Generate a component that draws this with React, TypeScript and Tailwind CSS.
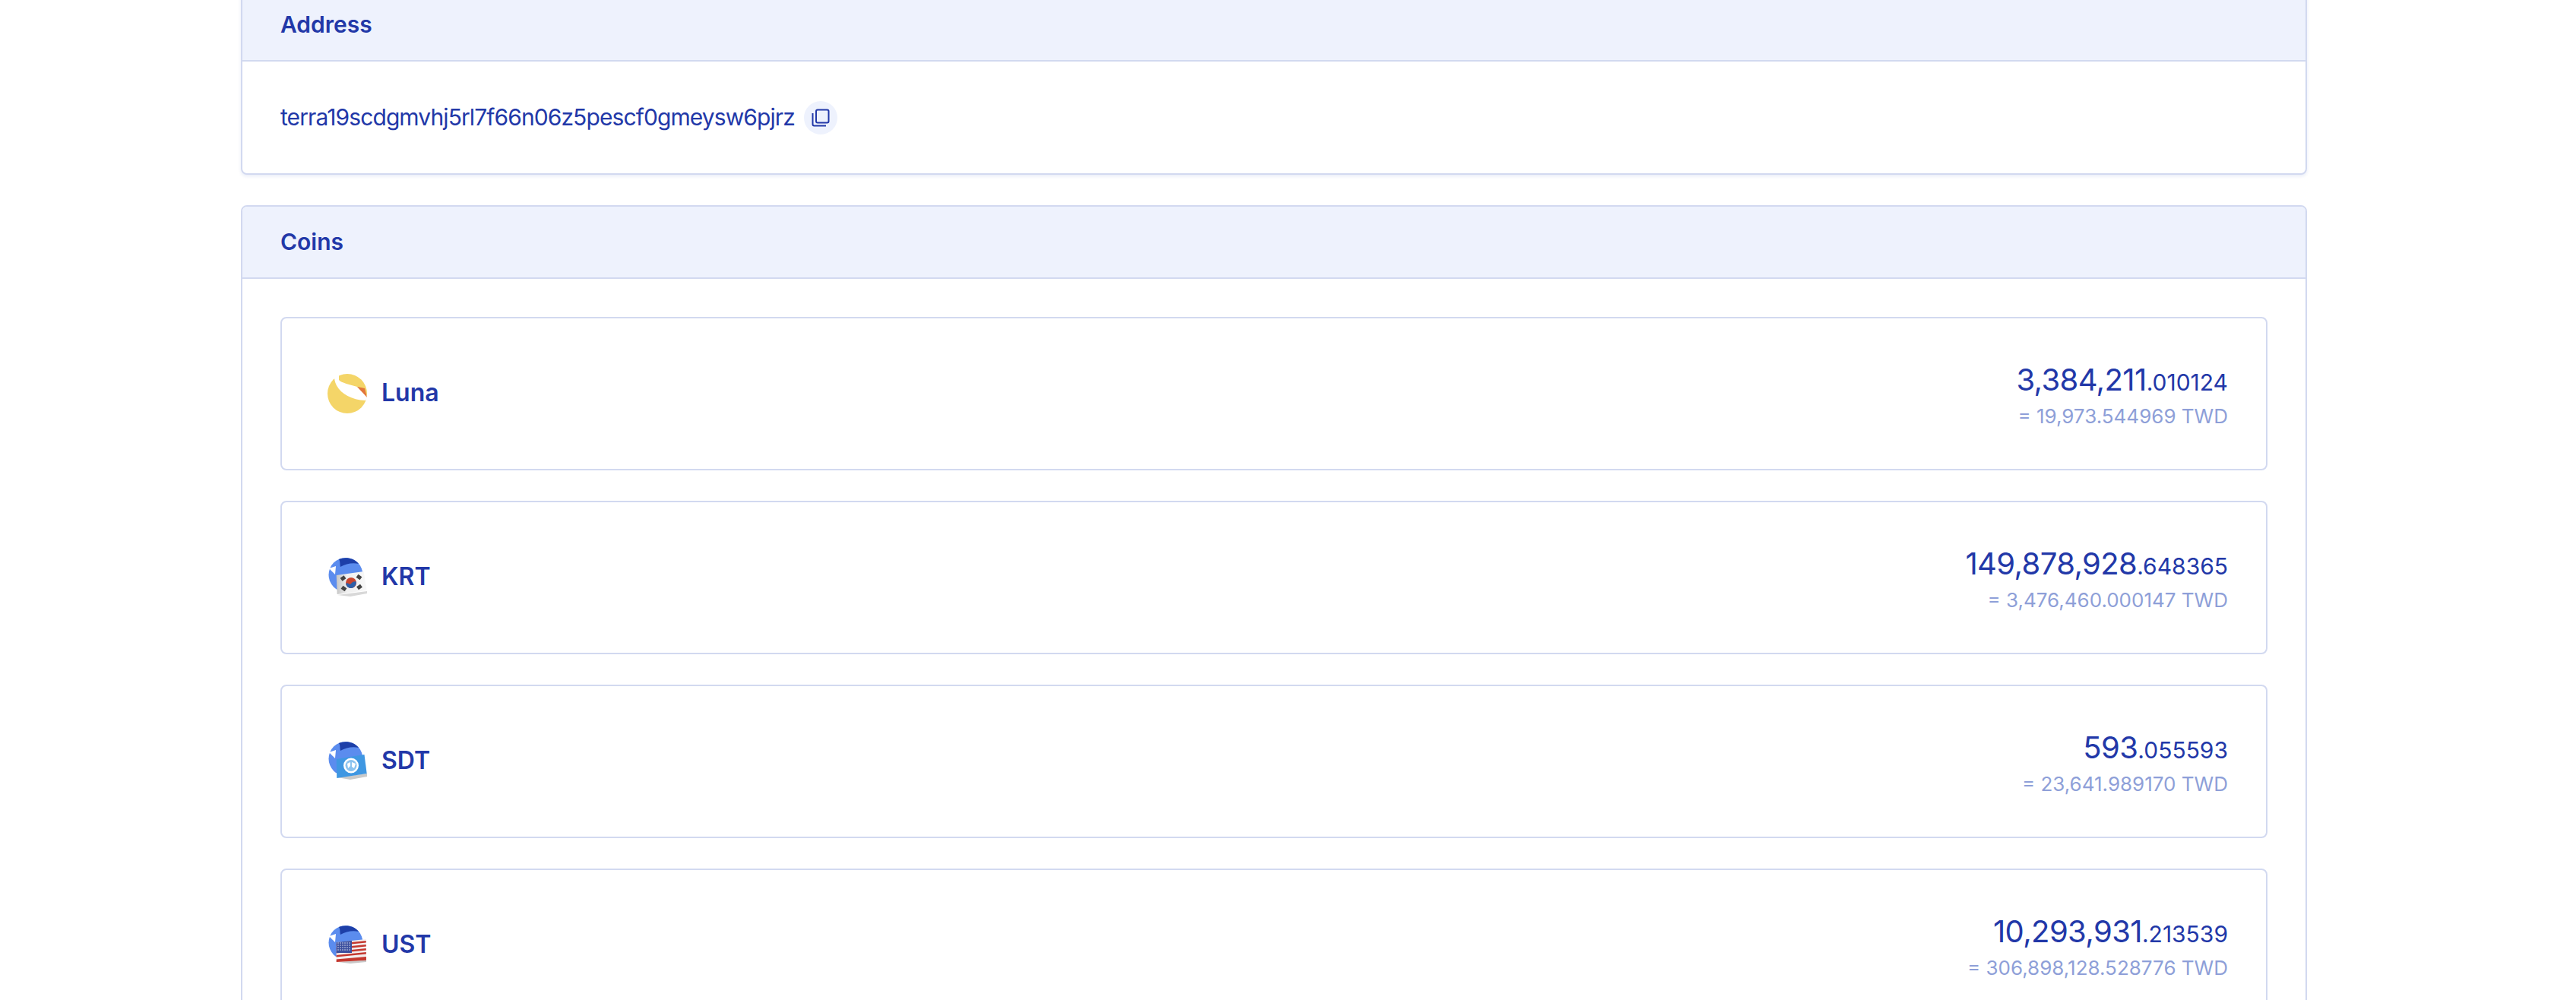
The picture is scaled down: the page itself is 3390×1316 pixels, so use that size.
import type { ReactNode } from "react";

const font = "font-['Inter','Liberation_Sans',sans-serif]";

const Globe = () => (
  <>
    <circle cx="24" cy="22.5" r="22.5" fill="#5b8cee" />
    <path d="M15 2 C22 -1 34 -1 41 8 C33 6 24 8 17 12 C16 8 17 5 15 2 Z" fill="#1d3fa8" />
    <path d="M2 14 L11 11 L10 22 C7 19 4 16 2 14 Z" fill="#ffffff" />
  </>
);

const LunaIcon = () => (
  <svg width="52" height="52" viewBox="0 0 52 52">
    <circle cx="26" cy="26" r="26" fill="#f4d568" />
    <path d="M9 5 C10 20 25 34 50 35 L53 30 L39 17 C30 14 18 12 15 8 L15 1 Z" fill="#ffffff" />
    <path d="M39 17 L49 19 L52 31 Z" fill="#e2763a" />
  </svg>
);

const KrtIcon = () => (
  <svg width="52" height="52" viewBox="0 0 52 52">
    <defs>
      <linearGradient id="krt-flag" x1="0" x2="1" y1="0" y2="0">
        <stop offset="0" stopColor="#c4c4c4" />
        <stop offset="0.35" stopColor="#f0f0f0" />
        <stop offset="1" stopColor="#f8f8f8" />
      </linearGradient>
    </defs>
    <Globe />
    <path d="M13 49 L52 44 L52 47 L30 51 Z" fill="#d8d8d8" />
    <path d="M11.7 23 L47.7 18 L51.7 43 L12.7 48 Z" fill="url(#krt-flag)" />
    <circle cx="31" cy="33" r="7" fill="#c8452f" />
    <path d="M24.2 34.5 C26 31 29 37 31 34 C33 31 36 31 37.8 31.5 C38 37 34 40 31 40 C27 40 25 37.5 24.2 34.5 Z" fill="#2d5fa8" />
    <g fill="#444444">
      <rect x="17.5" y="24.5" width="6" height="5" transform="rotate(-35 20.5 27)" />
      <rect x="38.5" y="23" width="6" height="5" transform="rotate(35 41.5 25.5)" />
      <rect x="18.5" y="38" width="6" height="5" transform="rotate(35 21.5 40.5)" />
      <rect x="39" y="36" width="6" height="5" transform="rotate(-35 42 38.5)" />
    </g>
  </svg>
);

const SdtIcon = () => (
  <svg width="52" height="52" viewBox="0 0 52 52">
    <Globe />
    <path d="M13 47 L52 42 L52 46 L30 50 Z" fill="#c9c9c9" />
    <path d="M11.7 23 L48.5 17 L51.7 42 L12.2 48 Z" fill="#3f97e2" />
    <circle cx="31" cy="31.5" r="10" fill="#ffffff" />
    <circle cx="31" cy="31.5" r="7.5" fill="#8cc3ef" />
    <path d="M26 29 L30 27 L30 32 L27 35 Z M32 27 L37 29 L35 35 L32 33 Z" fill="#ffffff" />
  </svg>
);

const UstIcon = () => (
  <svg width="52" height="52" viewBox="0 0 52 52">
    <defs>
      <clipPath id="ust-flag">
        <path d="M11.7 22 L50.7 18 L51 45.7 L11.7 48 Z" />
      </clipPath>
    </defs>
    <Globe />
    <path d="M14 48 L51 45 L51 48 L30 50 Z" fill="#c9c9c9" />
    <g clipPath="url(#ust-flag)">
      <rect x="11" y="17" width="41" height="32" fill="#f3eeee" />
      <g fill="#c4382f">
        <path d="M11 24 L52 20 V22.5 L11 26.5 Z" />
        <path d="M11 29 L52 25 V27.5 L11 31.5 Z" />
        <path d="M11 34 L52 30 V32.5 L11 36.5 Z" />
        <path d="M11 39 L52 35 V37.5 L11 41.5 Z" />
        <path d="M11 44.5 L52 41 V46 L11 49 Z" />
      </g>
      <rect x="11" y="20" width="21" height="16" fill="#3b4f9e" />
      <g fill="#ffffff">
        {[23, 26, 29, 32].map((y) =>
          [14, 17, 20, 23, 26, 29].map((x) => <circle key={`${x}-${y}`} cx={x} cy={y} r="0.7" />)
        )}
      </g>
    </g>
  </svg>
);

type Coin = {
  name: string;
  icon: ReactNode;
  whole: string;
  decimal: string;
  value: string;
};

const coins: Coin[] = [
  { name: "Luna", icon: <LunaIcon />, whole: "3,384,211", decimal: ".010124", value: "= 19,973.544969 TWD" },
  { name: "KRT", icon: <KrtIcon />, whole: "149,878,928", decimal: ".648365", value: "= 3,476,460.000147 TWD" },
  { name: "SDT", icon: <SdtIcon />, whole: "593", decimal: ".055593", value: "= 23,641.989170 TWD" },
  { name: "UST", icon: <UstIcon />, whole: "10,293,931", decimal: ".213539", value: "= 306,898,128.528776 TWD" },
];

const PanelHeader = ({ title }: { title: string }) => (
  <div className="flex h-[95px] items-center border-b-2 border-[#d2d9f0] bg-[#eef2fd] px-[50px]">
    <h2 className="text-[30px] font-semibold text-[#2238a8]">{title}</h2>
  </div>
);

const CopyIcon = () => (
  <svg width="24" height="24" viewBox="0 0 24 24" fill="none" stroke="#2238a8" strokeWidth="2">
    <rect x="6" y="1.5" width="16.5" height="17" rx="2" />
    <path d="M1.5 6 V20.5 Q1.5 22.5 3.5 22.5 H19" />
  </svg>
);

const CoinCard = ({ coin }: { coin: Coin }) => (
  <div className="flex h-[202px] items-center justify-between rounded-lg border-2 border-[#d2d9f0] bg-white pl-[60px] pr-[50px]">
    <div className="flex items-center gap-[19px]">
      {coin.icon}
      <span className="pb-[3px] text-[32px] font-semibold text-[#2238a8]">{coin.name}</span>
    </div>
    <div className="flex flex-col items-end pt-[6px]">
      <p className="text-[#2238a8]">
        <span className="text-[40px] leading-[50px] tracking-[-0.6px]">{coin.whole}</span>
        <span className="text-[30px] leading-[50px]">{coin.decimal}</span>
      </p>
      <p className="text-[26px] leading-[40px] text-[#8e9fd8]">{coin.value}</p>
    </div>
  </div>
);

export default function App() {
  return (
    <div className={`h-[1316px] overflow-hidden bg-white ${font}`}>
      <div className="-mt-4 ml-[317px] flex w-[2719px] flex-col gap-[40px]">
        <section className="overflow-hidden rounded-lg border-2 border-[#d2d9f0] bg-white shadow-[0_2px_4px_rgba(32,67,181,0.1)]">
          <PanelHeader title="Address" />
          <div className="flex h-[147px] items-center gap-[12px] px-[50px]">
            <span className="text-[30px] tracking-[-0.9px] text-[#2238a8]">terra19scdgmvhj5rl7f66n06z5pescf0gmeysw6pjrz</span>
            <button className="flex h-[44px] w-[44px] items-center justify-center rounded-full bg-[#eef2fd]">
              <CopyIcon />
            </button>
          </div>
        </section>
        <section className="overflow-hidden rounded-lg border-2 border-[#d2d9f0] bg-white">
          <PanelHeader title="Coins" />
          <div className="flex flex-col gap-[40px] p-[50px]">
            {coins.map((coin) => (
              <CoinCard coin={coin} key={coin.name} />
            ))}
          </div>
        </section>
      </div>
    </div>
  );
}
